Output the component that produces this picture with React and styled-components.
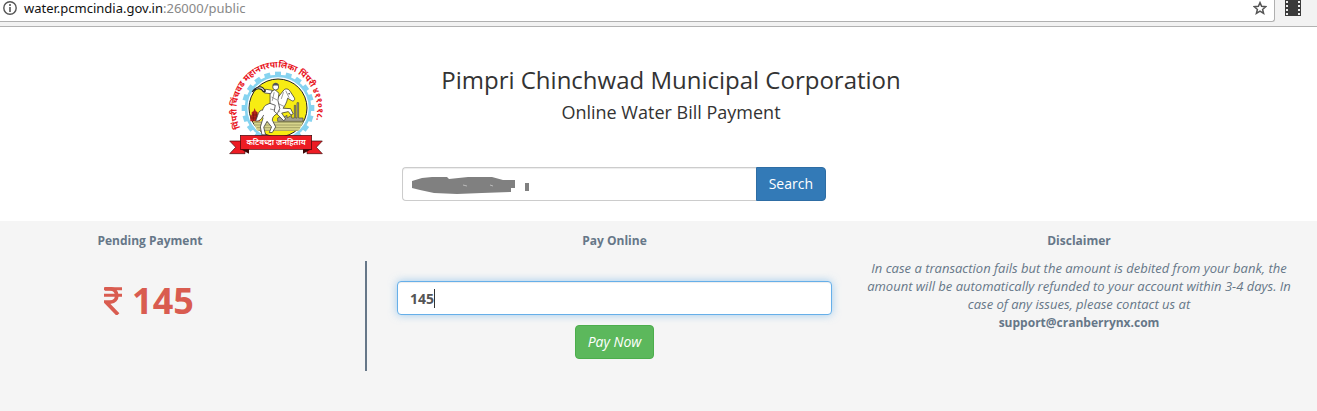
import React from "react";
import styled, { createGlobalStyle } from "styled-components";

const Global = createGlobalStyle`
  * { box-sizing: border-box; }
  body {
    margin: 0;
    background: #fff;
    color: #333;
    font-family: "Open Sans", "Noto Sans", sans-serif;
    font-size: 14px;
    line-height: 20px;
  }
`;

const BrowserBar = styled.div`
  display: flex;
  height: 27px;
  background: #f2f2f2;
  border-bottom: 1px solid #b2b2b2;
`;

const AddressBox = styled.div`
  display: flex;
  flex: 1;
  align-items: flex-start;
  height: 22px;
  padding: 0 7px 0 3px;
  background: #fff;
  border: solid #b0b0b0;
  border-width: 0 1px 1px 0;
  border-bottom-right-radius: 3px;
`;

const Address = styled.span`
  flex: 1;
  margin-left: 7px;
  font-family: "Noto Sans", sans-serif;
  font-size: 13px;
  line-height: 16px;
  color: #888;
  b { font-weight: 400; color: #111; }
`;

const Extension = styled.div`
  width: 42px;
  padding-left: 10px;
`;

const Icon = styled.svg`
  display: block;
  flex: none;
`;

const Header = styled.header`
  display: grid;
  grid-template-columns: 367fr 608fr 342fr;
  padding-top: 23px;
`;

const LogoCell = styled.div`
  display: flex;
  justify-content: center;
  padding-left: 50%;
`;

const Titles = styled.div`
  padding-top: 15px;
  text-align: center;
`;

const Title = styled.h1`
  margin: 0;
  font-size: 24px;
  font-weight: 400;
  line-height: 30px;
`;

const Subtitle = styled.h2`
  margin: 7px 0 0;
  font-size: 18px;
  font-weight: 400;
  line-height: 20px;
`;

const Columns = styled.div`
  display: grid;
  grid-template-columns: 367fr 495fr 455fr;
`;

const SearchForm = styled.form`
  position: relative;
  grid-column: 2;
  display: flex;
  margin: 5px 36px 20px 35px;
`;

const Field = styled.input`
  flex: 1;
  min-width: 0;
  width: 100%;
  height: 34px;
  padding: 6px 12px;
  border: 1px solid #ccc;
  border-radius: 4px;
  background: #fff;
  color: #555;
  font: inherit;
  outline: none;
  box-shadow: inset 0 1px 1px rgba(0, 0, 0, 0.075);
`;

const SearchField = styled(Field)`
  border-right: 0;
  border-radius: 4px 0 0 4px;
`;

const AmountField = styled(Field)`
  border-color: #66afe9;
  font-weight: 700;
  box-shadow: inset 0 1px 1px rgba(0, 0, 0, 0.075), 0 0 8px rgba(102, 175, 233, 0.6);
`;

const Scribble = styled.svg`
  position: absolute;
  left: 10px;
  top: 9px;
  pointer-events: none;
`;

const Button = styled.button`
  height: 34px;
  padding: 6px 12px;
  border: 1px solid ${(p) => p.$edge};
  border-radius: ${(p) => p.$radius || "4px"};
  background: ${(p) => p.$fill};
  color: #fff;
  font: inherit;
  font-style: ${(p) => (p.$italic ? "italic" : "normal")};
`;

const Payment = styled(Columns)`
  min-height: 190px;
  padding-top: 10px;
  background: #f5f5f5;
  color: #678;
  text-align: center;
`;

const Label = styled.h3`
  display: block;
  margin: 0;
  font-size: 12px;
  font-weight: 700;
  line-height: 20px;
`;

const Pending = styled.section`
  display: flex;
  flex-direction: column;
`;

const PendingBody = styled.div`
  height: 110px;
  margin-top: 10px;
  padding: 15px 67px 0 0;
  border-right: 2px solid #678;
`;

const PendingLabel = styled(Label)`
  padding-right: 67px;
`;

const Amount = styled.div`
  display: flex;
  align-items: center;
  justify-content: center;
  gap: 10px;
  color: #d95c50;
  font-size: 36px;
  font-weight: 700;
  line-height: 50px;
`;

const PayOnline = styled.section`
  padding: 0 30px;
`;

const PayForm = styled.form`
  display: flex;
  flex-direction: column;
  align-items: center;
  gap: 10px;
  margin: 30px 0 0;
`;

const EntryWrap = styled.div`
  position: relative;
  display: flex;
  width: 100%;
`;

const Caret = styled.span`
  position: absolute;
  left: 37px;
  top: 8px;
  width: 1px;
  height: 19px;
  background: #333;
`;

const Disclaimer = styled.section`
  padding-right: 21px;
`;

const Notice = styled.p`
  margin: 8px 0 0;
  font-size: 13px;
  font-style: italic;
  line-height: 18px;
`;

const Email = styled.a`
  display: block;
  color: inherit;
  font-size: 12px;
  font-style: normal;
  font-weight: 700;
  line-height: 20px;
  text-decoration: none;
`;

const teeth = Array.from({ length: 20 }, (_, i) => i * 18);

function Emblem() {
  return (
    <Icon width="112" height="112" viewBox="0 0 336 336" role="img" aria-label="Pimpri Chinchwad Municipal Corporation emblem">
      <defs>
        <path id="ring" d="M 64 234 A 121 128 0 1 1 284 234" />
      </defs>
      <g fill="#86d3f0">
        {teeth.map((a) => (
          <rect key={a} x="168" y="65" width="18" height="14" transform={`rotate(${a} 177 174)`} />
        ))}
      </g>
      <circle cx="177" cy="174" r="96" fill="#fff" stroke="#86d3f0" strokeWidth="8" />
      <circle cx="177" cy="174" r="87" fill="#f7ec13" stroke="#222" strokeWidth="3" />

      {/* ground and river */}
      <path d="M102 214H254L240 242H114Z" fill="#d8d58c" />
      <path d="M104 217H252M108 225H248M113 233H243M118 241H238" stroke="#8a8750" strokeWidth="2" />
      {/* temple */}
      <path d="M94 214V196H98V187L104 183L107 174L110 183L116 187V196H123V214Z" fill="#b5231c" />
      <path d="M95 204H122M99 195H117M103 187V213M112 187V213" stroke="#5d1010" strokeWidth="1.5" />
      {/* factory */}
      <path d="M176 214V204L190 196V204L204 196V204L218 196V204H226V166H230V204H234V158H239V204H252V214Z" fill="#a3a18f" stroke="#47463e" strokeWidth="2" />
      <g transform="translate(-26 -19) scale(1.12)">
        {/* horse */}
        <path d="M197 124C202 119 210 121 214 128L225 145C228 151 222 156 217 152L207 146C205 157 200 166 195 173L215 174L222 188L216 191L209 182L191 186L202 202L196 206L178 188C171 192 166 197 166 205L175 223L166 238L158 238L164 223L152 208L143 224L148 244H138L134 223L141 200C136 190 138 174 148 165C160 158 173 158 179 147Z" fill="#fff" stroke="#333" strokeWidth="2" strokeLinejoin="round" />
        <path d="M141 178C127 177 128 195 121 207C134 209 139 198 143 191" fill="#fff" stroke="#333" strokeWidth="2" />
        <path d="M196 130L190 148M202 126L211 145M181 160L201 170M160 175L187 181" stroke="#777" strokeWidth="2" fill="none" />
        <circle cx="211" cy="134" r="2" fill="#222" />
        {/* rider with raised sword */}
        <path d="M160 130L173 123L184 133L181 152L186 174L179 188L171 181L174 165L160 160Z" fill="#fff" stroke="#333" strokeWidth="2" />
        <path d="M162 134L145 132L148 122L166 125Z" fill="#fff" stroke="#333" strokeWidth="2" />
        <circle cx="175" cy="116" r="8" fill="#fff" stroke="#333" strokeWidth="2" />
        <path d="M166 112C169 102 182 103 184 112Z" fill="#555" />
        <path d="M147 127C141 112 126 110 112 129C124 119 136 117 142 129Z" fill="#ddd" stroke="#222" strokeWidth="3" />
        <path d="M164 143L179 151M171 130L166 153" stroke="#777" strokeWidth="2" />
      </g>

      {/* ribbon */}
      <path d="M32 273H78V311H32L50 292Z" fill="#ed1c24" stroke="#3b0808" strokeWidth="2" />
      <path d="M310 273H264V311H310L292 292Z" fill="#ed1c24" stroke="#3b0808" strokeWidth="2" />
      <path d="M64 297H90V311ZM278 297H252V311Z" fill="#3b0808" />
      <rect x="64" y="256" width="214" height="42" fill="#ed1c24" stroke="#3b0808" strokeWidth="2" />
      <text x="171" y="286" textAnchor="middle" fill="#fff" fontSize="24" fontWeight="600" fontFamily="'Noto Sans', sans-serif">कटिबध्दा जनहिताय</text>
      <text fill="#e8141c" fontSize="26" fontWeight="700" fontFamily="'Noto Sans', sans-serif">
        <textPath href="#ring">पिंपरी चिंचवड महानगरपालिका पिंपरी ४११०१८.</textPath>
      </text>
    </Icon>
  );
}

export default function App() {
  return (
    <>
      <Global />
      <BrowserBar>
        <AddressBox>
          <Icon width="14" height="16" viewBox="0 0 14 16" fill="none" stroke="#555">
            <circle cx="7" cy="8" r="6.2" strokeWidth="1.4" />
            <path d="M7 7v5M7 4v2" strokeWidth="1.6" />
          </Icon>
          <Address><b>water.pcmcindia.gov.in</b>:26000/public</Address>
          <Icon width="14" height="16" viewBox="0 0 14 16" fill="none" stroke="#555" strokeWidth="1.5">
            <path d="M7 2.6L8.6 6.3L12.7 6.7L9.6 9.4L10.6 13.4L7 11.2L3.4 13.4L4.4 9.4L1.3 6.7L5.4 6.3Z" />
          </Icon>
        </AddressBox>
        <Extension>
          <Icon width="16" height="16" viewBox="0 0 16 16">
            <path d="M0 0H16V16H0Z" fill="#3a3a3a" />
            <path d="M1 1h2v2h-2zM1 5h2v2h-2zM1 9h2v2h-2zM1 13h2v2h-2zM13 1h2v2h-2zM13 5h2v2h-2zM13 9h2v2h-2zM13 13h2v2h-2z" fill="#eee" />
          </Icon>
        </Extension>
      </BrowserBar>
      <Header>
        <LogoCell><Emblem /></LogoCell>
        <Titles>
          <Title>Pimpri Chinchwad Municipal Corporation</Title>
          <Subtitle>Online Water Bill Payment</Subtitle>
        </Titles>
      </Header>
      <Columns>
        <SearchForm onSubmit={(e) => e.preventDefault()}>
          <SearchField type="text" aria-label="Consumer number" />
          <Scribble width="120" height="20" viewBox="0 0 120 20" fill="#808080" aria-hidden="true">
            <path d="M0 5L10 2L20 1L35 1L37 3L56 1L80 1L91 4L103 4V12H99V16L70 17L45 18L22 17L8 14L0 12Z" />
            <path d="M113 7h4v8h-4z" />
            <path d="M51 9l4 1M78 9l3 1" stroke="#bbb" />
          </Scribble>
          <Button $fill="#337ab7" $edge="#2e6da4" $radius="0 4px 4px 0">Search</Button>
        </SearchForm>
      </Columns>
      <Payment as="main">
        <Pending>
          <PendingLabel>Pending Payment</PendingLabel>
          <PendingBody>
            <Amount>
              <Icon width="18" height="28" viewBox="0 0 18 28" fill="none" stroke="currentColor" role="img" aria-label="Rupees">
                <path d="M0 1.7H18M0 8.3H18" strokeWidth="3" />
                <path d="M1 1.8H6C15 1.8 15 15.2 6 15.2H2L14 27.5" strokeWidth="3.8" />
              </Icon>
              145
            </Amount>
          </PendingBody>
        </Pending>
        <PayOnline>
          <Label as="label" htmlFor="amount">Pay Online</Label>
          <PayForm onSubmit={(e) => e.preventDefault()}>
            <EntryWrap>
              <AmountField id="amount" type="text" defaultValue="145" />
              <Caret />
            </EntryWrap>
            <Button $fill="#5cb85c" $edge="#4cae4c" $italic>Pay Now</Button>
          </PayForm>
        </PayOnline>
        <Disclaimer>
          <Label>Disclaimer</Label>
          <Notice>
            In case a transaction fails but the amount is debited from your bank, the amount will be automatically refunded to your account within 3-4 days. In case of any issues, please contact us at
            <Email href="mailto:support@cranberrynx.com">support@cranberrynx.com</Email>
          </Notice>
        </Disclaimer>
      </Payment>
    </>
  );
}
